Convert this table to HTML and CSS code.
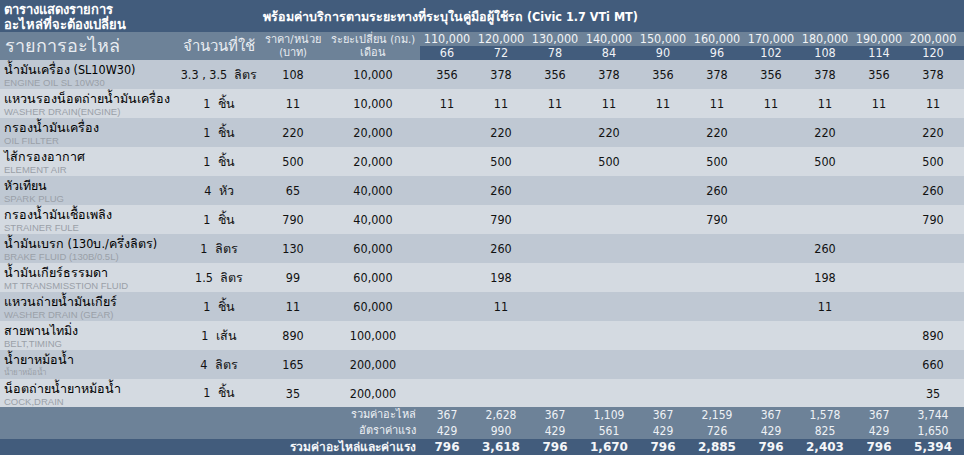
FILE: index.html
```html
<!DOCTYPE html>
<html lang="th">
<head>
<meta charset="utf-8">
<title>ตารางแสดงรายการอะไหล่ที่จะต้องเปลี่ยน</title>
<link rel="stylesheet" href="styles.css">
</head>
<body>
<table class="sched">
  <colgroup>
    <col class="c-name"><col class="c-qty"><col class="c-price"><col class="c-int">
    <col class="c-km"><col class="c-km"><col class="c-km"><col class="c-km"><col class="c-km">
    <col class="c-km"><col class="c-km"><col class="c-km"><col class="c-km"><col class="c-last">
  </colgroup>
  <thead>
    <tr class="title">
      <th colspan="2" class="t-left"><span class="tl">ตารางแสดงรายการ</span><span class="tl">อะไหล่ที่จะต้องเปลี่ยน</span></th>
      <th colspan="12" class="t-right">พร้อมค่าบริการตามระยะทางที่ระบุในคู่มือผู้ใช้รถ (Civic 1.7 VTi MT)</th>
    </tr>
    <tr class="head1">
      <th rowspan="2" class="h-name">รายการอะไหล่</th>
      <th rowspan="2" class="h-qty">จำนวนที่ใช้</th>
      <th rowspan="2" class="h-small">ราคา/หน่วย<br>(บาท)</th>
      <th rowspan="2" class="h-small">ระยะเปลี่ยน (กม.)<br>เดือน</th>
      <th>110,000</th><th>120,000</th><th>130,000</th><th>140,000</th><th>150,000</th>
      <th>160,000</th><th>170,000</th><th>180,000</th><th>190,000</th><th class="last">200,000</th>
    </tr>
    <tr class="head2">
      <th>66</th><th>72</th><th>78</th><th>84</th><th>90</th>
      <th>96</th><th>102</th><th>108</th><th>114</th><th class="last">120</th>
    </tr>
  </thead>
  <tbody>
    <tr class="odd">
      <td class="name"><span class="th">น้ำมันเครื่อง (SL10W30)</span><span class="en">ENGINE OIL SL 10W30</span></td>
      <td class="qty">3.3 , 3.5&nbsp; ลิตร</td><td>108</td><td>10,000</td>
      <td>356</td><td>378</td><td>356</td><td>378</td><td>356</td><td>378</td><td>356</td><td>378</td><td>356</td><td class="last">378</td>
    </tr>
    <tr class="even">
      <td class="name"><span class="th">แหวนรองน็อตถ่ายน้ำมันเครื่อง</span><span class="en">WASHER DRAIN(ENGINE)</span></td>
      <td class="qty">1&nbsp; ชิ้น</td><td>11</td><td>10,000</td>
      <td>11</td><td>11</td><td>11</td><td>11</td><td>11</td><td>11</td><td>11</td><td>11</td><td>11</td><td class="last">11</td>
    </tr>
    <tr class="odd">
      <td class="name"><span class="th">กรองน้ำมันเครื่อง</span><span class="en">OIL FILLTER</span></td>
      <td class="qty">1&nbsp; ชิ้น</td><td>220</td><td>20,000</td>
      <td></td><td>220</td><td></td><td>220</td><td></td><td>220</td><td></td><td>220</td><td></td><td class="last">220</td>
    </tr>
    <tr class="even">
      <td class="name"><span class="th">ไส้กรองอากาศ</span><span class="en">ELEMENT AIR</span></td>
      <td class="qty">1&nbsp; ชิ้น</td><td>500</td><td>20,000</td>
      <td></td><td>500</td><td></td><td>500</td><td></td><td>500</td><td></td><td>500</td><td></td><td class="last">500</td>
    </tr>
    <tr class="odd">
      <td class="name"><span class="th">หัวเทียน</span><span class="en">SPARK PLUG</span></td>
      <td class="qty">4&nbsp; หัว</td><td>65</td><td>40,000</td>
      <td></td><td>260</td><td></td><td></td><td></td><td>260</td><td></td><td></td><td></td><td class="last">260</td>
    </tr>
    <tr class="even">
      <td class="name"><span class="th">กรองน้ำมันเชื้อเพลิง</span><span class="en">STRAINER FULE</span></td>
      <td class="qty">1&nbsp; ชิ้น</td><td>790</td><td>40,000</td>
      <td></td><td>790</td><td></td><td></td><td></td><td>790</td><td></td><td></td><td></td><td class="last">790</td>
    </tr>
    <tr class="odd">
      <td class="name"><span class="th">น้ำมันเบรก (130บ./ครึ่งลิตร)</span><span class="en">BRAKE FLUID (130B/0.5L)</span></td>
      <td class="qty">1&nbsp; ลิตร</td><td>130</td><td>60,000</td>
      <td></td><td>260</td><td></td><td></td><td></td><td></td><td></td><td>260</td><td></td><td class="last"></td>
    </tr>
    <tr class="even">
      <td class="name"><span class="th">น้ำมันเกียร์ธรรมดา</span><span class="en">MT TRANSMISSTION FLUID</span></td>
      <td class="qty">1.5&nbsp; ลิตร</td><td>99</td><td>60,000</td>
      <td></td><td>198</td><td></td><td></td><td></td><td></td><td></td><td>198</td><td></td><td class="last"></td>
    </tr>
    <tr class="odd">
      <td class="name"><span class="th">แหวนถ่ายน้ำมันเกียร์</span><span class="en">WASHER DRAIN (GEAR)</span></td>
      <td class="qty">1&nbsp; ชิ้น</td><td>11</td><td>60,000</td>
      <td></td><td>11</td><td></td><td></td><td></td><td></td><td></td><td>11</td><td></td><td class="last"></td>
    </tr>
    <tr class="even">
      <td class="name"><span class="th">สายพานไทมิ่ง</span><span class="en">BELT,TIMING</span></td>
      <td class="qty">1&nbsp; เส้น</td><td>890</td><td>100,000</td>
      <td></td><td></td><td></td><td></td><td></td><td></td><td></td><td></td><td></td><td class="last">890</td>
    </tr>
    <tr class="odd">
      <td class="name"><span class="th">น้ำยาหม้อน้ำ</span><span class="en en-th">น้ำยาหม้อน้ำ</span></td>
      <td class="qty">4&nbsp; ลิตร</td><td>165</td><td>200,000</td>
      <td></td><td></td><td></td><td></td><td></td><td></td><td></td><td></td><td></td><td class="last">660</td>
    </tr>
    <tr class="even lastrow">
      <td class="name"><span class="th">น็อตถ่ายน้ำยาหม้อน้ำ</span><span class="en">COCK,DRAIN</span></td>
      <td class="qty">1&nbsp; ชิ้น</td><td>35</td><td>200,000</td>
      <td></td><td></td><td></td><td></td><td></td><td></td><td></td><td></td><td></td><td class="last">35</td>
    </tr>
  </tbody>
  <tfoot>
    <tr class="sum">
      <td colspan="4" class="s-label">รวมค่าอะไหล่</td>
      <td>367</td><td>2,628</td><td>367</td><td>1,109</td><td>367</td><td>2,159</td><td>367</td><td>1,578</td><td>367</td><td class="last">3,744</td>
    </tr>
    <tr class="sum">
      <td colspan="4" class="s-label">อัตราค่าแรง</td>
      <td>429</td><td>990</td><td>429</td><td>561</td><td>429</td><td>726</td><td>429</td><td>825</td><td>429</td><td class="last">1,650</td>
    </tr>
    <tr class="total">
      <td colspan="4" class="s-label">รวมค่าอะไหล่และค่าแรง</td>
      <td>796</td><td>3,618</td><td>796</td><td>1,670</td><td>796</td><td>2,885</td><td>796</td><td>2,403</td><td>796</td><td class="last">5,394</td>
    </tr>
  </tfoot>
</table>
</body>
</html>
```

FILE: styles.css
```css
html, body {
  margin: 0;
  padding: 0;
  background: #ffffff;
}

.sched {
  width: 964px;
  border-collapse: collapse;
  border-spacing: 0;
  table-layout: fixed;
  font-family: "DejaVu Sans Condensed", "DejaVu Sans", sans-serif;
  font-size: 12px;
  color: #111111;
}

.c-name { width: 178px; }
.c-qty { width: 82px; }
.c-price { width: 66px; }
.c-int { width: 94px; }
.c-km { width: 54px; }
.c-last { width: 58px; }

.sched th,
.sched td {
  padding: 0;
  text-align: center;
  vertical-align: middle;
  font-weight: normal;
  white-space: nowrap;
}

.sched .last {
  padding-right: 4px;
}

/* title row */
.title {
  height: 32px;
  background: #425c7c;
  color: #ffffff;
}
.title th {
  font-weight: bold;
  font-size: 12.5px;
}
.title .t-left {
  text-align: left;
  padding-left: 4px;
  padding-top: 1px;
}
.title .tl {
  display: block;
  font-size: 13px;
  line-height: 15px;
}
.title .t-right {
  text-align: left;
  padding-left: 3px;
  padding-top: 1px;
}

/* header rows */
.head1 {
  height: 14px;
  background: #6d8298;
  color: #f0f2f5;
}
.head1 th {
  font-size: 12.5px;
  line-height: 14px;
  vertical-align: bottom;
}
.head2 {
  height: 14px;
  background: #425c7c;
  color: #f0f2f5;
}
.head2 th {
  font-size: 12.5px;
  line-height: 14px;
}
.head1 .h-name {
  text-align: left;
  padding-left: 5px;
  font-size: 18px;
  color: #e8ecf1;
  vertical-align: middle;
}
.head1 .h-qty {
  font-size: 15px;
  color: #e8ecf1;
  vertical-align: middle;
}
.head1 .h-small {
  font-size: 11px;
  line-height: 13px;
  color: #e8ecf1;
  vertical-align: middle;
}

/* data rows */
tbody tr {
  height: 29px;
}
tbody tr.lastrow {
  height: 28px;
}
tbody tr.odd { background: #bfc8d3; }
tbody tr.even { background: #d4dae1; }
tbody td {
  font-size: 12.5px;
}
tbody td.name {
  text-align: left;
  padding-left: 4px;
  vertical-align: top;
  padding-top: 3px;
}
.name .th {
  display: block;
  font-size: 12.5px;
  line-height: 14px;
  color: #000000;
}
.name .en {
  display: block;
  font-family: "Liberation Sans", sans-serif;
  font-size: 9.5px;
  line-height: 11px;
  color: #9aa0a8;
}
.name .en-th {
  font-size: 8px;
}

/* summary rows */
.sum {
  height: 16px;
  background: #6d8298;
  color: #eef1f5;
}
.sum td {
  font-size: 12px;
  line-height: 16px;
}
.sum .s-label {
  font-size: 11px;
}
.total {
  height: 16px;
  background: #425c7c;
  color: #f4f6f9;
}
.total td {
  font-family: "DejaVu Sans", sans-serif;
  font-weight: bold;
  font-size: 12px;
  line-height: 16px;
}
.sched .s-label {
  text-align: right;
  padding-right: 4px;
}
```
